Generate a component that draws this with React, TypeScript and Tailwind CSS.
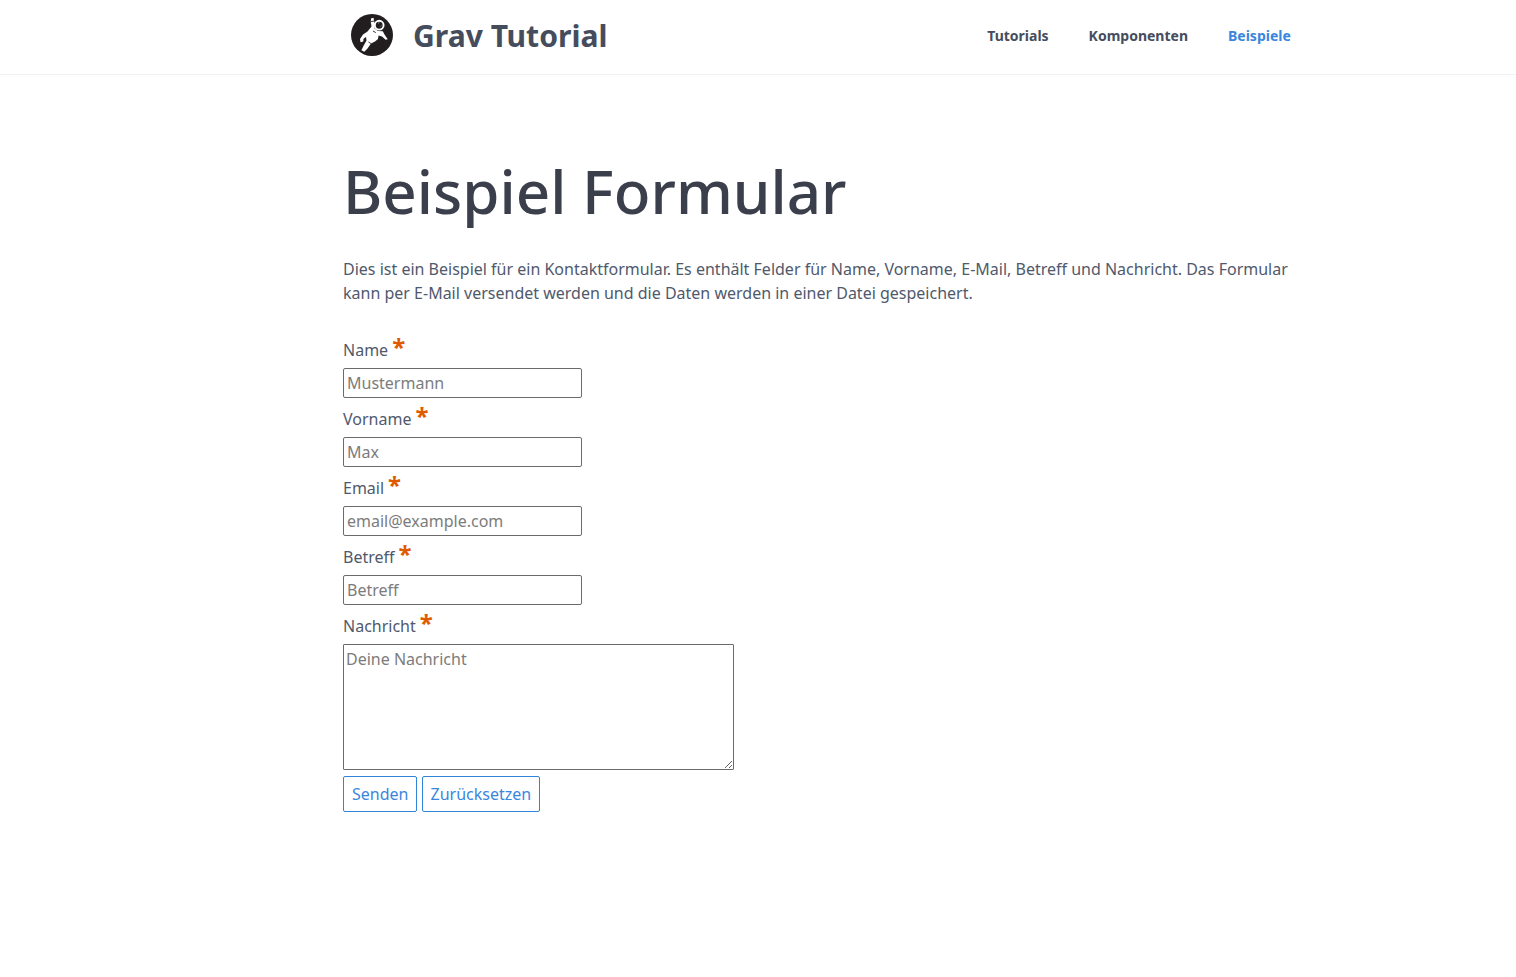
const fields = [
  { label: "Name", placeholder: "Mustermann", type: "text" },
  { label: "Vorname", placeholder: "Max", type: "text" },
  { label: "Email", placeholder: "email@example.com", type: "email" },
  { label: "Betreff", placeholder: "Betreff", type: "text" },
];

function Logo() {
  return (
    <svg viewBox="0 0 42 42" className="-mt-px h-[42px] w-[42px]" aria-hidden="true">
      <circle cx="21" cy="21" r="21" fill="#221e1f" />
      <path
        fill="#fff"
        d="M20 4.5 22.5 3.8 23.2 7.5 24 11 23.5 14.5 27 17 31.8 17.2 33.5 20.5 36.7 25.2 34.6 25.8 31 22.5 27.5 21.5 27 25 24 27.5 20 29.5 16.5 34.5 13.3 37.8 10.4 36.3 12.7 31.5 15.5 26.5 15 23 12.5 24.8 12.3 27.5 9.5 28.3 9 25 12 20.5 16.5 17.5 18.5 15 20.5 12.5 19.8 8Z"
      />
      <circle cx="28.2" cy="11.2" r="4.4" fill="#221e1f" stroke="#fff" strokeWidth="1.9" />
      <path d="M27 9.3l1.5-.8M29.5 12.5l1-1" stroke="#aaa" strokeWidth=".8" />
      <path d="m22 17 2.8 1.6M20 7.5l3-.4M17.5 28l2.4 1.5" stroke="#221e1f" strokeWidth=".9" />
    </svg>
  );
}

function Label({ text }: { text: string }) {
  return (
    <label className="flex h-[39px] items-center pt-0.5">
      {text}
      <span className="mb-1.5 ml-1 text-2xl leading-6 font-bold text-[#e05a00]">*</span>
    </label>
  );
}

export default function App() {
  return (
    <div className="min-h-[977px] bg-white font-['Noto_Sans',sans-serif] text-base text-[#50596c]">
      <header className="h-[75px] border-b border-[#f0f1f4]">
        <div className="ml-[343px] flex h-[71px] w-[956px] items-center justify-between pr-2 pl-2">
          <a className="flex items-center gap-5 text-[30.1px] font-bold text-[#454d5d]">
            <Logo />
            Grav Tutorial
          </a>
          <nav className="flex gap-10 pr-[0.2px] text-sm font-bold text-[#454d5d]">
            <a>Tutorials</a>
            <a>Komponenten</a>
            <a className="text-[#3a86dd]">Beispiele</a>
          </nav>
        </div>
      </header>
      <main className="ml-[343px] w-[956px] pt-[80px]">
        <h1 className="text-[60.1px] leading-[72px] font-medium text-[#3b3f4c]">Beispiel Formular</h1>
        <p className="mt-[30px] leading-6">
          Dies ist ein Beispiel für ein Kontaktformular. Es enthält Felder für Name, Vorname, E-Mail, Betreff und Nachricht. Das Formular kann per E-Mail versendet werden und die Daten werden in einer Datei gespeichert.
        </p>
        <form className="mt-[24px]">
          {fields.map((f) => (
            <div key={f.label}>
              <Label text={f.label} />
              <input
                type={f.type}
                placeholder={f.placeholder}
                className="block h-[30px] w-[239px] rounded-[2px] border border-[#6b6b6b] px-[3px] placeholder:text-[#7c7c7c]"
              />
            </div>
          ))}
          <Label text="Nachricht" />
          <textarea
            placeholder="Deine Nachricht"
            className="block h-[126px] w-[391px] rounded-[1px] border border-[#6b6b6b] p-0.5 placeholder:text-[#7c7c7c]"
          />
          <div className="mt-1.5 flex gap-[4.4px]">
            <button type="button" className="h-9 rounded-[2px] border border-[#3085d8] px-2 text-[#3a86dd]">Senden</button>
            <button type="button" className="h-9 w-[118px] rounded-[2px] border border-[#3085d8] text-[#3a86dd]">Zurücksetzen</button>
          </div>
        </form>
      </main>
    </div>
  );
}
